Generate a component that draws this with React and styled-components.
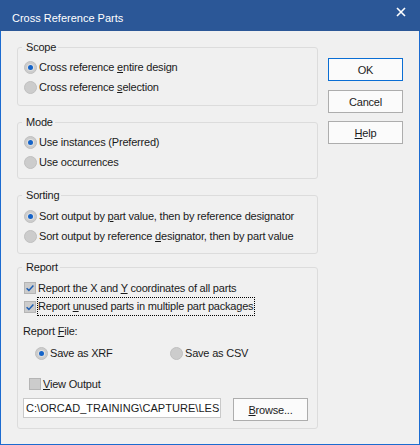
import React from "react";
import styled, { createGlobalStyle } from "styled-components";

const GlobalStyle = createGlobalStyle`
  html, body {
    margin: 0;
    padding: 0;
    background: #f0f0f0;
  }
  body {
    font-family: "Liberation Sans", Arial, sans-serif;
    -webkit-font-smoothing: antialiased;
  }
`;

const Window = styled.div`
  width: 420px;
  height: 445px;
  box-sizing: border-box;
  display: flex;
  flex-direction: column;
  background: #f0f0f0;
  color: #1b1b1b;
  font-size: 11px;
`;

const TitleBar = styled.div`
  height: 31px;
  flex: none;
  display: flex;
  align-items: flex-start;
  background: #2b5797;
  color: #ffffff;
`;

const Title = styled.div`
  padding: 12px 0 0 12px;
  font-size: 11px;
  line-height: 13px;
`;

const CloseGlyph = styled.svg`
  margin: 7px 14px 0 auto;
  display: block;
`;

const Body = styled.div`
  flex: 1;
  display: flex;
  gap: 10px;
  padding: 9px 0 0 16px;
  border: 1px solid #1c6bd0;
  border-top: none;
  box-sizing: border-box;
`;

const LeftCol = styled.div`
  width: 301px;
  display: flex;
  flex-direction: column;
`;

const Group = styled.fieldset`
  margin: ${(p) => p.$mt || 0}px 0 0;
  padding: ${(p) => p.$pt}px 0 ${(p) => p.$pb}px;
  border: 1px solid #dcdcdc;
  border-radius: 3px;
  min-width: 0;
`;

const Legend = styled.legend`
  margin-left: 4px;
  padding: 0 2px 0 4px;
  font-size: 11px;
  line-height: 15px;
  letter-spacing: -0.2px;
  color: #1b1b1b;
`;

const Option = styled.div`
  display: flex;
  align-items: center;
  gap: ${(p) => (p.$gap != null ? p.$gap : 2)}px;
  height: ${(p) => p.$h || 20}px;
  padding-left: ${(p) => p.$indent || 6}px;
  margin-top: ${(p) => p.$mt || 0}px;
  letter-spacing: -0.2px;
  line-height: 14px;
  white-space: nowrap;
`;

const Caption = styled.span`
  outline: ${(p) => (p.$focused ? "1px dotted #000" : "none")};
  outline-offset: 0;
  padding: ${(p) => (p.$focused ? "1px 1px 2px 0" : "0")};
`;

const Key = styled.span`
  text-decoration: underline;
  text-underline-offset: 1px;
`;

const SaveRow = styled.div`
  display: grid;
  grid-template-columns: 135px auto;
  height: 18px;
  margin-top: 4px;
  padding-left: 11px;
`;

const PathRow = styled.div`
  display: flex;
  align-items: flex-start;
  gap: 12px;
  margin-top: 5px;
  padding-left: 5px;
`;

const PathBox = styled.div`
  width: 198px;
  height: 20px;
  box-sizing: border-box;
  border: 1px solid #c9c9c9;
  background: #ffffff;
  padding-left: 2px;
  white-space: nowrap;
  line-height: 18px;
  font-size: 11px;
  letter-spacing: 0.05px;
  color: #1b1b1b;
`;

const ButtonCol = styled.div`
  display: flex;
  flex-direction: column;
  gap: 8px;
  padding-top: 18px;
`;

const Button = styled.div`
  width: 75px;
  height: 23px;
  box-sizing: border-box;
  border: 1px solid ${(p) => (p.$default ? "#0a6ed4" : "#adadad")};
  background: #fbfbfb;
  display: flex;
  align-items: center;
  justify-content: center;
  font-size: 11px;
  letter-spacing: -0.2px;
  color: #1b1b1b;
  margin-top: ${(p) => p.$mt || 0}px;
`;

function Radio({ checked }) {
  return (
    <svg width="13" height="13" viewBox="0 0 13 13">
      <circle cx="6.5" cy="6.5" r="6" fill="#cccccc" stroke="#bfbfbf" strokeWidth="1" />
      {checked && <circle cx="6.5" cy="6.5" r="3.6" fill="#e0e0e0" />}
      {checked && <circle cx="6.5" cy="6.5" r="2.5" fill="#1463c8" />}
    </svg>
  );
}

function Check({ checked }) {
  return (
    <svg width="12" height="12" viewBox="0 0 12 12">
      <rect x="0.5" y="0.5" width="11" height="11" fill="#cccccc" stroke="#b5b5b5" />
      {checked && (
        <path d="M2.6 6.2 L4.9 8.4 L9.4 3.4" fill="none" stroke="#1f5fb3" strokeWidth="1.5" />
      )}
    </svg>
  );
}

export default function App() {
  return (
    <>
      <GlobalStyle />
      <Window>
        <TitleBar>
          <Title>Cross Reference Parts</Title>
          <CloseGlyph width="10" height="10" viewBox="0 0 10 10">
            <path d="M1 1 L9 9 M9 1 L1 9" stroke="#ffffff" strokeWidth="1.6" />
          </CloseGlyph>
        </TitleBar>
        <Body>
          <LeftCol>
            <Group $pt={2} $pb={8}>
              <Legend>Scope</Legend>
              <Option>
                <Radio checked />
                <span>Cross reference <Key>e</Key>ntire design</span>
              </Option>
              <Option>
                <Radio />
                <span>Cross reference <Key>s</Key>election</span>
              </Option>
            </Group>

            <Group $mt={9} $pt={2} $pb={6}>
              <Legend>Mode</Legend>
              <Option>
                <Radio checked />
                <span>Use instances (Preferred)</span>
              </Option>
              <Option>
                <Radio />
                <span>Use occurrences</span>
              </Option>
            </Group>

            <Group $mt={9} $pt={3} $pb={7}>
              <Legend>Sorting</Legend>
              <Option>
                <Radio checked />
                <span>Sort output by <Key>p</Key>art value, then by reference designator</span>
              </Option>
              <Option>
                <Radio />
                <span>Sort output by reference <Key>d</Key>esignator, then by part value</span>
              </Option>
            </Group>

            <Group $mt={6} $pt={3} $pb={7}>
              <Legend>Report</Legend>
              <Option $h={19}>
                <Check checked />
                <span>Report the X and <Key>Y</Key> coordinates of all parts</span>
              </Option>
              <Option $h={19}>
                <Check checked />
                <Caption $focused>Report <Key>u</Key>nused parts in multiple part packages</Caption>
              </Option>
              <Option $h={18} $mt={6} $indent={5}>
                <span>Report <Key>F</Key>ile:</span>
              </Option>
              <SaveRow>
                <Option $h={18} $indent={0}>
                  <Radio checked />
                  <span>Save as XRF</span>
                </Option>
                <Option $h={18} $indent={0}>
                  <Radio />
                  <span>Save as CSV</span>
                </Option>
              </SaveRow>
              <Option $h={18} $mt={13} $indent={11} $gap={2}>
                <Check />
                <span><Key>V</Key>iew Output</span>
              </Option>
              <PathRow>
                <PathBox>C:\ORCAD_TRAINING\CAPTURE\LES</PathBox>
                <Button><span><Key>B</Key>rowse...</span></Button>
              </PathRow>
            </Group>
          </LeftCol>

          <ButtonCol>
            <Button $default>OK</Button>
            <Button $mt={1}>Cancel</Button>
            <Button><span><Key>H</Key>elp</span></Button>
          </ButtonCol>
        </Body>
      </Window>
    </>
  );
}
